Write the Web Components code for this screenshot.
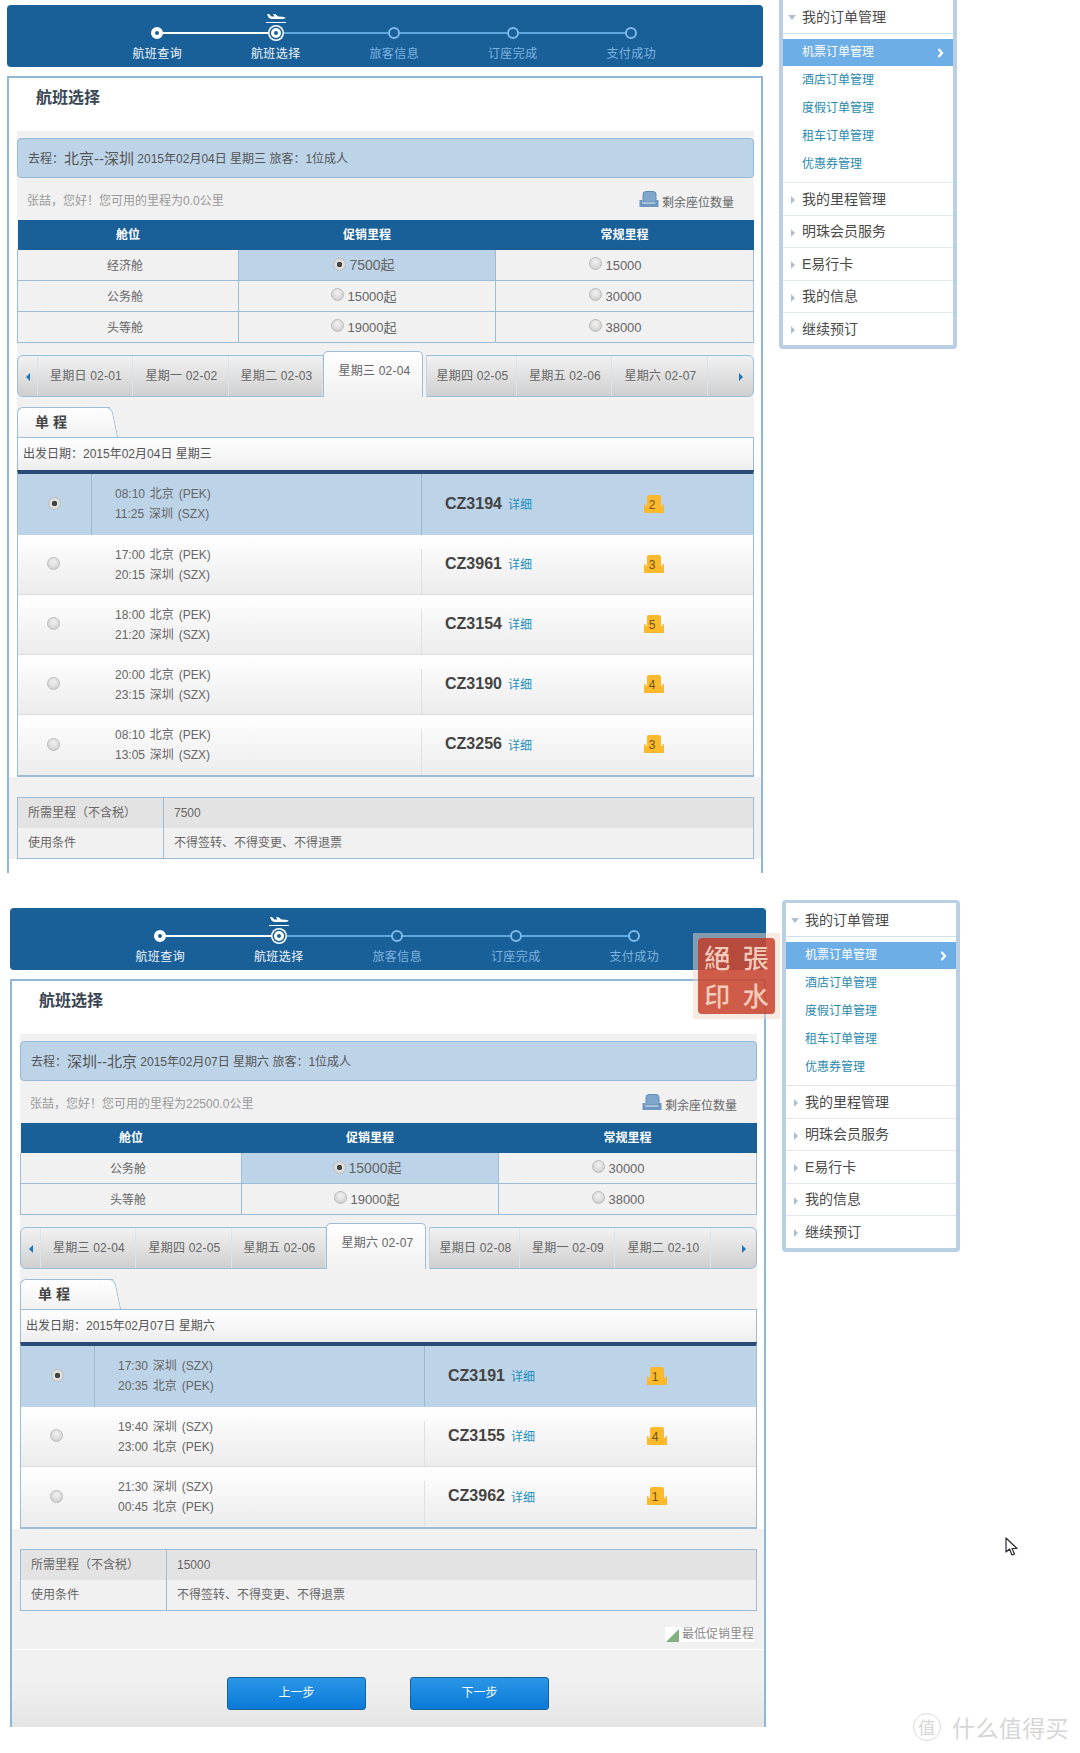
<!DOCTYPE html>
<html lang="zh">
<head>
<meta charset="utf-8">
<title>航班选择</title>
<style>
  html, body { margin: 0; padding: 0; background: #fff; }
  body {
    position: relative;
    height: 1753px;
    overflow: hidden;
    font: 12px/1.4 "Liberation Sans", "Noto Sans CJK SC", sans-serif;
    color: #555;
  }
</style>
</head>
<body>

<booking-shot>
  <step-bar slot="main"></step-bar>
  <fare-panel slot="main" heading="航班选择">
    <trip-banner route="北京--深圳" date="2015年02月04日 星期三" miles="0.0"></trip-banner>
    <fare-table rows='[["经济舱","7500起","15000"],["公务舱","15000起","30000"],["头等舱","19000起","38000"]]'></fare-table>
    <date-tabs days="星期日 02-01|星期一 02-02|星期二 02-03|星期三 02-04|星期四 02-05|星期五 02-06|星期六 02-07"></date-tabs>
    <flight-list date="2015年02月04日 星期三">
      <flight-row selected dep="08:10 北京 (PEK)" arr="11:25 深圳 (SZX)" no="CZ3194" seats="2"></flight-row>
      <flight-row dep="17:00 北京 (PEK)" arr="20:15 深圳 (SZX)" no="CZ3961" seats="3"></flight-row>
      <flight-row dep="18:00 北京 (PEK)" arr="21:20 深圳 (SZX)" no="CZ3154" seats="5"></flight-row>
      <flight-row dep="20:00 北京 (PEK)" arr="23:15 深圳 (SZX)" no="CZ3190" seats="4"></flight-row>
      <flight-row dep="08:10 北京 (PEK)" arr="13:05 深圳 (SZX)" no="CZ3256" seats="3"></flight-row>
    </flight-list>
    <info-table slot="lower" miles="7500" style="margin-bottom:14px"></info-table>
  </fare-panel>
  <side-menu slot="side"></side-menu>
</booking-shot>

<booking-shot class="second">
  <step-bar slot="main"></step-bar>
  <fare-panel slot="main" heading="航班选择">
    <trip-banner route="深圳--北京" date="2015年02月07日 星期六" miles="22500.0"></trip-banner>
    <fare-table rows='[["公务舱","15000起","30000"],["头等舱","19000起","38000"]]'></fare-table>
    <date-tabs days="星期三 02-04|星期四 02-05|星期五 02-06|星期六 02-07|星期日 02-08|星期一 02-09|星期二 02-10"></date-tabs>
    <flight-list date="2015年02月07日 星期六">
      <flight-row selected dep="17:30 深圳 (SZX)" arr="20:35 北京 (PEK)" no="CZ3191" seats="1"></flight-row>
      <flight-row dep="19:40 深圳 (SZX)" arr="23:00 北京 (PEK)" no="CZ3155" seats="4"></flight-row>
      <flight-row dep="21:30 深圳 (SZX)" arr="00:45 北京 (PEK)" no="CZ3962" seats="1"></flight-row>
    </flight-list>
    <info-table slot="lower" miles="15000"></info-table>
    <lowest-note slot="lower"></lowest-note>
    <step-actions slot="lower"></step-actions>
  </fare-panel>
  <side-menu slot="side"></side-menu>
  <seal-stamp slot="over"></seal-stamp>
</booking-shot>

<page-marks></page-marks>

<script>
const BLUE = '#1a6098';
const LINE = '#9dbdd6';
const PALE = '#bcd3e8';

class BookingShot extends HTMLElement {
  connectedCallback() {
    this.attachShadow({ mode: 'open' });
    const second = this.classList.contains('second');
    this.shadowRoot.innerHTML = `
      <style>
        :host { display: flex; position: relative; gap: 16px; margin-left: ${second ? 10 : 7}px; margin-bottom: 30px; }
        .main { width: 756px; padding-top: 5px; display: flex; flex-direction: column; gap: 9px; }
        .side { width: 178px; margin-top: -3px; }
      </style>
      <div class="main"><slot name="main"></slot></div>
      <div class="side"><slot name="side"></slot></div>
      <slot name="over"></slot>
    `;
  }
}

class StepBar extends HTMLElement {
  connectedCallback() {
    this.attachShadow({ mode: 'open' });
    const names = ['航班查询', '航班选择', '旅客信息', '订座完成', '支付成功'];
    const steps = names.map((n, i) => {
      const cls = i === 0 ? 'done' : i === 1 ? 'now' : '';
      const plane = i === 1 ? `<svg class="plane" width="20" height="9" viewBox="0 0 20 9">
        <path d="M0 8h20v1H0z M1 0h2l2.500 2.500h3L7 0h2l3.500 2.500 4 .3c2 .2 3 .8 3 1.200s-1 .9-3 .9H5L2.500 3.500z" fill="#fff"/></svg>` : '';
      return `<div class="step ${cls}">${plane}<i></i><span>${n}</span></div>`;
    }).join('');
    this.shadowRoot.innerHTML = `
      <style>
        :host { display: block; height: 62px; background: ${BLUE}; border-radius: 4px; box-sizing: border-box; padding: 22px 0 0 91px; }
        .steps { display: flex; }
        .step { width: 118.500px; display: flex; flex-direction: column; align-items: center; position: relative; }
        .step::after { content: ""; position: absolute; left: 50%; top: 5px; width: 100%; height: 2px; background: #62a6de; }
        .step:last-child::after { display: none; }
        .step.done::after { background: #fff; }
        i { width: 8px; height: 8px; border: 2px solid #7db9ea; border-radius: 50%; background: ${BLUE}; position: relative; z-index: 1; }
        .done i { border-color: #fff; border-width: 4px; width: 4px; height: 4px; background: ${BLUE}; }
        .now i { width: 4px; height: 4px; border: 3px solid #fff; margin: 1px 0; background: ${BLUE}; box-shadow: 0 0 0 1.500px ${BLUE}, 0 0 0 3px #fff; }
        span { margin-top: 7px; font-size: 12px; letter-spacing: 0.4px; line-height: 17px; color: #7db4e0; }
        .done span, .now span { color: #eef5fb; }
        .plane { position: absolute; top: -13px; left: 50%; margin-left: -10px; }
      </style>
      <div class="steps">${steps}</div>
    `;
  }
}

class FarePanel extends HTMLElement {
  connectedCallback() {
    this.attachShadow({ mode: 'open' });
    this.shadowRoot.innerHTML = `
      <style>
        :host { display: block; border: 2px solid #8fb8d6; border-bottom: 0; background: #fff; }
        h2 { margin: 0; height: 53px; box-sizing: border-box; padding: 10px 0 0 27px; font-size: 16px; line-height: 20px; font-weight: 700; color: #3a4654; }
        .grey { margin: 0 7px 0 8px; padding-top: 7px; background: #f1f1f1; }
        .lower { padding-top: 20px; background: #f1f1f1; }
      </style>
      <h2>${this.getAttribute('heading')}</h2>
      <div class="grey"><slot></slot></div>
      <div class="lower"><slot name="lower"></slot></div>
    `;
  }
}

class TripBanner extends HTMLElement {
  connectedCallback() {
    this.attachShadow({ mode: 'open' });
    this.shadowRoot.innerHTML = `
      <style>
        :host { display: block; }
        .bar { height: 40px; box-sizing: border-box; background: ${PALE}; border: 1px solid #94bad9; border-radius: 4px; padding: 3px 10px 0; display: flex; align-items: center; font-size: 12px; color: #555; white-space: pre; }
        b { font-weight: 400; font-size: 15px; margin-top: -2px; }
        .row { height: 42px; display: flex; justify-content: space-between; padding: 0 20px 0 10px; box-sizing: border-box; align-items: flex-start; }
        .hi { color: #999; margin-top: 15px; line-height: 17px; }
        .seat { display: flex; align-items: flex-start; gap: 3px; margin-top: 13px; color: #666; }
        .seat span { margin-top: 4px; line-height: 17px; }
      </style>
      <div class="bar">去程&#xFF1A;<b>${this.getAttribute('route')}</b> ${this.getAttribute('date')} 旅客&#xFF1A;1位成人</div>
      <div class="row">
        <span class="hi">张喆&#xFF0C;您好&#xFF01;您可用的里程为${this.getAttribute('miles')}公里</span>
        <div class="seat">
          <svg width="20" height="17" viewBox="0 0 20 17">
            <path d="M4 3.500Q4 .5 7 .5h7q3 0 3 3V11H4z" fill="#7fa7cd" stroke="#5f8cb8"/>
            <path d="M.5 9h3v3.500h13V9h3v7H.5z" fill="#6d97c0"/>
          </svg>
          <span>剩余座位数量</span>
        </div>
      </div>
    `;
  }
}

class FareTable extends HTMLElement {
  connectedCallback() {
    this.attachShadow({ mode: 'open' });
    const rows = JSON.parse(this.getAttribute('rows'));
    const body = rows.map((r, i) => `
      <tr>
        <td class="cab">${r[0]}</td>
        <td class="mid ${i === 0 ? 'on' : ''}"><label><s class="${i === 0 ? 'dot' : ''}"></s>${r[1]}</label></td>
        <td class="reg"><label><s></s>${r[2]}</label></td>
      </tr>`).join('');
    this.shadowRoot.innerHTML = `
      <style>
        :host { display: block; margin-bottom: 12px; }
        table { width: 100%; border-collapse: collapse; table-layout: fixed; font-size: 12px; color: #666; }
        th { height: 30px; padding: 1px 0 0; box-sizing: border-box; background: ${BLUE}; color: #fff; font-weight: 700; }
        td { padding: 2px 0 0; box-sizing: content-box; border: 1px solid ${LINE}; border-top: 0; text-align: center; background: #f1f1f1; height: 28px; font-size: 13px; }
        .cab { padding-right: 6px; font-size: 12px; }
        .mid { padding-right: 6px; }
        .reg { padding-right: 18px; }
        td.on { background: ${PALE}; }
        td.on label { font-size: 14px; }
        label { display: inline-flex; align-items: center; gap: 3px; }
        s { width: 11px; height: 11px; margin-top: -4px; border-radius: 50%; border: 1px solid #bbb; background: radial-gradient(circle at 50% 35%, #f2f2f2, #c9c9c9); display: inline-block; }
        s.dot { background: radial-gradient(circle, #444 0 2.500px, #ddd 3px); margin-top: -2px; }
      </style>
      <table>
        <colgroup><col style="width:221px"><col style="width:257px"><col></colgroup>
        <tr><th>舱位</th><th>促销里程</th><th>常规里程</th></tr>
        ${body}
      </table>
    `;
  }
}

class DateTabs extends HTMLElement {
  connectedCallback() {
    this.attachShadow({ mode: 'open' });
    const widths = [95, 96, 94, 100, 90, 95, 96];
    const cells = this.getAttribute('days').split('|').map((d, i) =>
      `<div class="tab ${i === 3 ? 'on' : ''}" style="width:${widths[i]}px">${d}</div>${i === 3 ? '<div class="gap"></div>' : ''}`
    ).join('');
    this.shadowRoot.innerHTML = `
      <style>
        :host { display: block; margin-bottom: 10px; }
        .bar { height: 42px; box-sizing: border-box; display: flex; border: 1px solid ${LINE}; border-radius: 6px; background: linear-gradient(#f2f2f2, #cfcfcf); letter-spacing: 0.2px; }
        .tab, .arrow { box-sizing: border-box; border-right: 1px solid #d9e4ec; display: flex; align-items: center; justify-content: center; color: #666; padding-top: 1px; }
        .tab { padding-left: 2px; }
        .arrow { width: 20px; }
        .arrow.r { width: 45px; border: 0; justify-content: flex-end; padding-right: 10px; }
        .tab.on { margin-top: -5px; height: 46px; align-items: flex-start; padding: 11px 0 0 3px; background: linear-gradient(#fff, #f1f1f1); border: 1px solid ${LINE}; border-bottom: 0; border-radius: 5px 5px 0 0; }
        .gap { width: 4px; background: linear-gradient(90deg, #f1f1f1, #f1f1f1 60%, #bcc8d2); margin-top: -1px; margin-bottom: -1px; }
        .tri { width: 0; height: 0; border: 4px solid transparent; }
        .tri.l { border-right: 4px solid #1a78b8; border-left: 0; }
        .tri.r { border-left: 4px solid #1a78b8; border-right: 0; }
      </style>
      <div class="bar">
        <div class="arrow"><span class="tri l"></span></div>
        ${cells}
        <div class="arrow r"><span class="tri r"></span></div>
      </div>
    `;
  }
}

class FlightList extends HTMLElement {
  connectedCallback() {
    this.attachShadow({ mode: 'open' });
    this.shadowRoot.innerHTML = `
      <style>
        :host { display: block; }
        .tab { width: 93px; height: 30px; box-sizing: border-box; position: relative; background: linear-gradient(#fff, #f1f1f1); border: 1px solid ${LINE}; border-right: 0; border-bottom: 0; border-radius: 6px 0 0 0; padding-left: 17px; font-size: 14px; line-height: 28px; font-weight: 700; color: #444; }
        .tab::after { content: ""; position: absolute; right: -5px; top: -1px; bottom: 0; width: 14px; background: linear-gradient(#fff, #f1f1f1); border: 1px solid ${LINE}; border-left: 0; border-bottom: 0; border-radius: 0 6px 0 0; transform: skewX(12deg); }
        .date { height: 33px; box-sizing: border-box; border: 1px solid ${LINE}; border-bottom: 0; background: linear-gradient(#fff, #eee); padding-left: 5px; line-height: 32px; color: #555; }
        .list { border: 1px solid ${LINE}; border-top: 4px solid #2c4a78; border-bottom-width: 2px; }
      </style>
      <div class="tab">单 程</div>
      <div class="date">出发日期&#xFF1A;${this.getAttribute('date')}</div>
      <div class="list"><slot></slot></div>
    `;
  }
}

class FlightRow extends HTMLElement {
  connectedCallback() {
    this.attachShadow({ mode: 'open' });
    const sel = this.hasAttribute('selected');
    const fmt = s => s.replace(/ /g, '&nbsp;');
    this.shadowRoot.innerHTML = `
      <style>
        :host { display: grid; grid-template-columns: 74px 329px 223px 1fr; height: ${sel ? 61 : 60}px; box-sizing: border-box; background: ${sel ? PALE : 'linear-gradient(#fff, #ececec)'}; ${sel ? '' : 'border-bottom: 1px solid #ddd;'} }
        :host(:last-child) { border-bottom: 0; }
        .c { display: flex; align-items: center; box-sizing: border-box; }
        .pick { justify-content: center; ${sel ? 'border-right: 1px solid #9bb9d3;' : 'padding-right: 4px;'} padding-bottom: 2px; }
        s { width: 11px; height: 11px; border-radius: 50%; border: 1px solid #bbb; background: ${sel ? 'radial-gradient(circle, #444 0 2.500px, #ddd 3px)' : 'radial-gradient(circle at 50% 35%, #f2f2f2, #c9c9c9)'}; }
        .time { padding-left: 23px; line-height: 19.500px; color: #666; display: block; padding-top: 11px; word-spacing: 1.500px; }
        .no { padding-left: 23px; gap: 6px; padding-bottom: 1px; ${sel ? 'border-left: 1px solid #9bb9d3;' : 'border-left: 1px solid; border-image: linear-gradient(transparent 25%, #e0e0e0 25%) 1;'} }
        b { font-size: 16px; color: #444; }
        a { color: #1b8fbd; margin-top: 3px; }
        .seat { position: relative; width: 20px; height: 18px; text-align: center; line-height: 20px; color: #6b5520; top: -1px; }
        .seat svg { position: absolute; left: 0; top: 0; }
        .seat span { position: relative; left: -2px; }
      </style>
      <div class="c pick"><s></s></div>
      <div class="c time">${fmt(this.getAttribute('dep'))}<br>${fmt(this.getAttribute('arr'))}</div>
      <div class="c no"><b>${this.getAttribute('no')}</b><a>详细</a></div>
      <div class="c"><div class="seat">
        <svg width="20" height="18" viewBox="0 0 20 18"><path d="M3 2Q3 0 5 0h10q2 0 2 2v9h1.500V9H20v9H0V9h1.500v2H3z" fill="#fdb92c"/></svg>
        <span>${this.getAttribute('seats')}</span>
      </div></div>
    `;
  }
}

class InfoTable extends HTMLElement {
  connectedCallback() {
    this.attachShadow({ mode: 'open' });
    this.shadowRoot.innerHTML = `
      <style>
        :host { display: grid; grid-template-columns: 145px 1fr; margin: 0 7px 0 8px; border: 1px solid ${LINE}; background: #f1f1f1; line-height: 30px; color: #666; }
        div { height: 30px; padding-left: 10px; }
        .v { border-left: 1px solid ${LINE}; }
        .top { background: #e3e3e3; }
      </style>
      <div class="top">所需里程&#xFF08;不含税&#xFF09;</div>
      <div class="top v">${this.getAttribute('miles')}</div>
      <div>使用条件</div>
      <div class="v">不得签转、不得变更、不得退票</div>
    `;
  }
}

class LowestNote extends HTMLElement {
  connectedCallback() {
    this.attachShadow({ mode: 'open' });
    this.shadowRoot.innerHTML = `
      <style>
        :host { display: flex; justify-content: flex-end; margin: 16px 10px 7px 0; }
        div { display: flex; align-items: flex-end; gap: 3px; background: #fff; height: 15px; line-height: 15px; color: #888; padding-left: 1px; }
      </style>
      <div><svg width="13" height="13" viewBox="0 0 13 13"><path d="M13 0v13H0z" fill="#7fb27f"/></svg>最低促销里程</div>
    `;
  }
}

class StepActions extends HTMLElement {
  connectedCallback() {
    this.attachShadow({ mode: 'open' });
    this.shadowRoot.innerHTML = `
      <style>
        :host { display: flex; justify-content: center; gap: 44px; height: 78px; box-sizing: border-box; padding-top: 27px; border-top: 1px solid #fff; background: linear-gradient(#f1f1f1 40%, #e4e4e4); }
        button { width: 139px; height: 33px; padding: 0; font: inherit; color: #fff; border: 1px solid #1a6098; border-radius: 3px; background: linear-gradient(#2a96e6, #0a7ad8); }
      </style>
      <button>上一步</button>
      <button>下一步</button>
    `;
  }
}

class SideMenu extends HTMLElement {
  connectedCallback() {
    this.attachShadow({ mode: 'open' });
    const sections = ['我的里程管理', '明珠会员服务', 'E易行卡', '我的信息', '继续预订'];
    this.shadowRoot.innerHTML = `
      <style>
        :host { display: block; box-sizing: border-box; background: #fff; border: 4px solid #b9d0e4; border-top-width: 3px; border-radius: 4px; color: #4a4a4a; }
        .head { box-sizing: content-box; height: 31px; padding-top: 2px; display: flex; align-items: center; font-size: 14px; padding-left: 19px; position: relative; border-bottom: 1px solid #dfe8ef; }
        .head::before { content: ""; position: absolute; left: 8px; top: 13px; border: 4px solid transparent; border-left: 4px solid #aebfcc; border-right: 0; }
        .head.open { border-bottom: 1px solid #cfe0ec; }
        .head.open::before { left: 5px; top: 15px; border: 4px solid transparent; border-top: 5px solid #aebfcc; border-bottom: 0; }
        .sub { padding: 5px 0 4px; border-bottom: 1px solid #dfe8ef; }
        .sub div { height: 28px; line-height: 28px; padding-left: 19px; color: #2a8aae; position: relative; }
        .sub .on { height: 27px; line-height: 27px; background: #6daee6; color: #fff; }
        .on svg { position: absolute; right: 9px; top: 9px; }
        .head:last-child { border-bottom: 0; }
        .sec { height: 29.500px; }
      </style>
      <div class="head open">我的订单管理</div>
      <div class="sub">
        <div class="on">机票订单管理<svg width="7" height="10" viewBox="0 0 7 10"><path d="M1.500 1l3.500 4-3.500 4" fill="none" stroke="#fff" stroke-width="2.200"/></svg></div>
        <div>酒店订单管理</div>
        <div>度假订单管理</div>
        <div>租车订单管理</div>
        <div>优惠券管理</div>
      </div>
      ${sections.map(s => `<div class="head sec">${s}</div>`).join('')}
    `;
  }
}

class SealStamp extends HTMLElement {
  connectedCallback() {
    this.attachShadow({ mode: 'open' });
    this.shadowRoot.innerHTML = `
      <style>
        :host { position: absolute; left: 683px; top: 30px; width: 87px; height: 86px; box-sizing: border-box; padding: 5px; background: rgba(240, 214, 196, .5); }
        div { height: 100%; border-radius: 4px; background: rgba(195, 51, 29, .78); display: grid; grid-template-columns: 1fr 1fr; grid-template-rows: 1fr 1fr; place-items: center; font: 500 26px/1 "Noto Sans CJK TC", sans-serif; color: #f3cbbb; }
      </style>
      <div><span>絕</span><span>張</span><span>印</span><span>水</span></div>
    `;
  }
}

class PageMarks extends HTMLElement {
  connectedCallback() {
    this.attachShadow({ mode: 'open' });
    this.shadowRoot.innerHTML = `
      <style>
        :host { position: absolute; left: 0; top: 0; width: 1080px; height: 1753px; pointer-events: none; }
        svg { position: absolute; left: 1005px; top: 1537px; }
        .mark { position: absolute; left: 913px; top: 1713px; display: flex; align-items: center; gap: 11px; color: #d6d6d6; font: 23px/28px "Noto Sans CJK SC", sans-serif; letter-spacing: 0.4px; }
        .mark i { width: 26px; height: 26px; border: 1px solid #dcdcdc; border-radius: 50%; font-style: normal; font-size: 17px; line-height: 25px; text-align: center; }
      </style>
      <svg width="14" height="20" viewBox="0 0 14 20"><path d="M1 1v14l3.500-3 2.500 6 2.500-1-2.500-5.500H12z" fill="#fff" stroke="#2a2a35" stroke-width="1.200" stroke-linejoin="round"/></svg>
      <div class="mark"><i>值</i><span>什么值得买</span></div>
    `;
  }
}

customElements.define('booking-shot', BookingShot);
customElements.define('step-bar', StepBar);
customElements.define('fare-panel', FarePanel);
customElements.define('trip-banner', TripBanner);
customElements.define('fare-table', FareTable);
customElements.define('date-tabs', DateTabs);
customElements.define('flight-list', FlightList);
customElements.define('flight-row', FlightRow);
customElements.define('info-table', InfoTable);
customElements.define('lowest-note', LowestNote);
customElements.define('step-actions', StepActions);
customElements.define('side-menu', SideMenu);
customElements.define('seal-stamp', SealStamp);
customElements.define('page-marks', PageMarks);
</script>
</body>
</html>
